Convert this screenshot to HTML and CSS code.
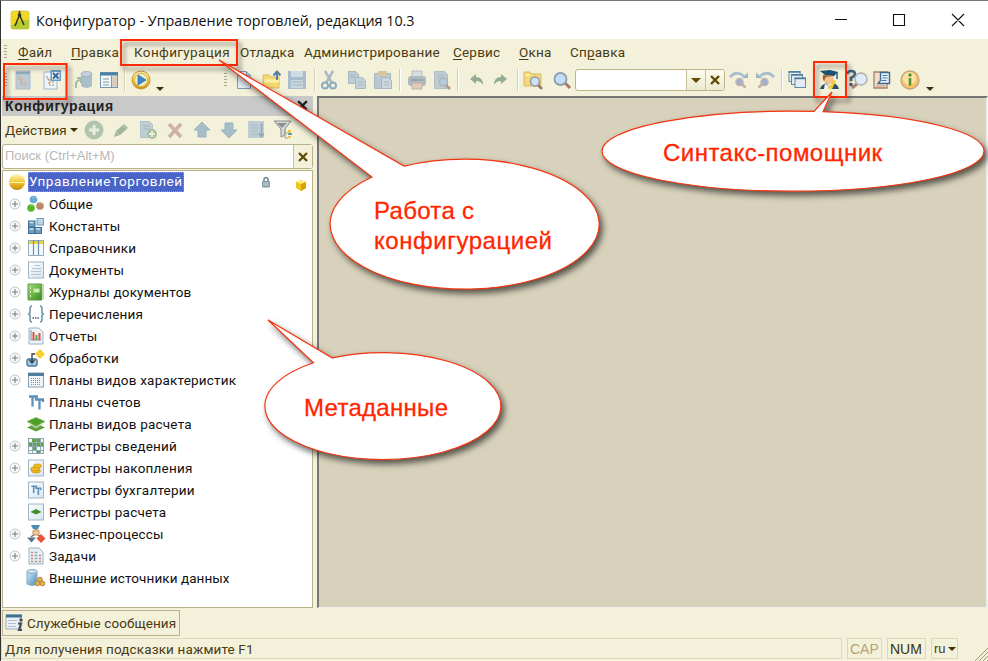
FILE: index.html
```html
<!DOCTYPE html>
<html lang="ru">
<head>
<meta charset="utf-8">
<title>Конфигуратор - Управление торговлей, редакция 10.3</title>
<link rel="stylesheet" href="styles.css">
</head>
<body>
<svg class="defs" aria-hidden="true">
  <defs>
    <linearGradient id="gGold" x1="0" y1="0" x2="0" y2="1"><stop offset="0" stop-color="#fff6c0"/><stop offset=".5" stop-color="#f3c831"/><stop offset="1" stop-color="#c98a10"/></linearGradient>
    <linearGradient id="gBlue" x1="0" y1="0" x2="1" y2="1"><stop offset="0" stop-color="#d6ecfa"/><stop offset="1" stop-color="#4e87b2"/></linearGradient>
    <linearGradient id="gPaper" x1="0" y1="0" x2="1" y2="1"><stop offset="0" stop-color="#ffffff"/><stop offset="1" stop-color="#d5e3ef"/></linearGradient>
    <linearGradient id="gGreen" x1="0" y1="0" x2="1" y2="1"><stop offset="0" stop-color="#a5dc70"/><stop offset="1" stop-color="#348a20"/></linearGradient>
    <symbol id="plus" viewBox="0 0 12 12"><circle cx="6" cy="6" r="5" fill="#fafafa" stroke="#c4c4c4"/><path d="M3 6h6M6 3v6" stroke="#777" stroke-width="1"/></symbol>
    <symbol id="paper" viewBox="0 0 18 18"><rect x="1.500" y="1" width="15" height="16" fill="url(#gPaper)" stroke="#9fb6c8"/></symbol>
    <symbol id="tt" viewBox="0 0 18 18"><path d="M2 3.500h9M5.500 3.500v10M8 6.500h9M12.500 6.500v10M9 4v3M16 7v2" fill="none" stroke="#5d91b8" stroke-width="2.300"/></symbol>
    <symbol id="mag" viewBox="0 0 20 20"><path d="M13 13l5 5" stroke="#a7776b" stroke-width="3"/><circle cx="8.500" cy="9" r="6" fill="#c4def9" stroke="#8f9eac" stroke-width="1.800"/></symbol>
    <symbol id="doc" viewBox="0 0 20 20"><path d="M3.500 1.500h9l4 4v13h-13z" fill="#e2edf5" stroke="#7d9db8"/><path d="M12.500 1.500v4h4" fill="#b9d0e2" stroke="#7d9db8"/></symbol>
    <symbol id="step" viewBox="0 0 20 20"><path d="M1 7q6-7 14-1" fill="none" stroke="#a9bfce" stroke-width="2.800"/><path d="M19 2.500v5.500h-6z" fill="#9db5c6"/><path d="M12.500 14l4 3.500" stroke="#c3a9a0" stroke-width="2.600"/><circle cx="10.500" cy="12" r="3.500" fill="#9fadd0" stroke="#c3b3ae" stroke-width="1.500"/></symbol>
    <symbol id="tree" viewBox="0 0 20 20"><rect x="3" y="1" width="14" height="18" fill="#bccbd3" stroke="#aebdc6"/><path d="M3 3h14" stroke="#94abba" stroke-width="2.500"/><path d="M6 6v3h4M8 9v6h5M8 12h5" fill="none" stroke="#d1a27c" stroke-dasharray="2 1"/></symbol>
    <symbol id="arrow" viewBox="0 0 20 20"><path d="M10 2l8 8h-4v7H6v-7H2z" fill="#a8bdca" stroke="#9bb2c1"/></symbol>
    <symbol id="undo" viewBox="0 0 20 20"><path d="M4 9l6-5v3q7 0 7 8-2-4-7-4v3z" fill="#94ab95"/></symbol>
  </defs>
</svg>

<div class="window">
  <header class="titlebar">
    <svg class="app-icon" viewBox="0 0 20 20"><rect x="1" y="1" width="18" height="18" rx="2" fill="#efd722" stroke="#d9cb5c"/><path d="M1 16q9-7 18-6v9H1z" fill="#b5cb32"/><path d="M9.500 1v4M9.500 5L5 16M9.500 5l4.500 10" stroke="#303428" stroke-width="1.600"/><circle cx="9.500" cy="5" r="1.800" fill="#333"/></svg>
    <span class="title">Конфигуратор - Управление торговлей, редакция 10.3</span>
    <svg class="caption-buttons" viewBox="0 0 140 20"><path d="M3 9.500h12M61.500 4.500h11v11h-11zM120 4l12 12M132 4l-12 12" fill="none" stroke="#111" stroke-width="1.100"/></svg>
  </header>

  <nav class="menubar">
    <i class="grip"></i>
    <span class="m1"><u>Ф</u>айл</span><span class="m2"><u>П</u>равка</span><span class="m3">Конфигурация</span><span class="m4">Отладка</span><span class="m5">Администрирование</span><span class="m6"><u>С</u>ервис</span><span class="m7"><u>О</u>кна</span><span class="m8">Сп<u>р</u>авка</span>
  </nav>

  <div class="toolbar">
    <i class="grip"></i>
    <svg class="ic"><use href="#tree"/></svg>
    <svg class="ic" viewBox="0 0 20 20"><rect x="2" y="2" width="13" height="17" fill="#eef5fa" stroke="#9db9cb"/><path d="M5 6v3h4M7 9v6h5M7 12h5" fill="none" stroke="#b9865f" stroke-dasharray="2 1"/><rect x="8.500" y="0" width="10.500" height="11" fill="#6b9dc3"/><rect x="10" y="2" width="7.500" height="7.500" fill="#e6f2fb"/><path d="M11 3l5.500 5.500M16.500 3L11 8.500" stroke="#2f6390" stroke-width="1.800"/></svg>
    <svg class="ic" viewBox="0 0 20 20"><path d="M7 4v12q5.500 4 11 0V4z" fill="#aabecb"/><ellipse cx="12.500" cy="4" rx="5.500" ry="2.500" fill="#c4d1d8" stroke="#9bb0bf"/><path d="M2 18q-1-8 4-8M3 8h4v5" fill="none" stroke="#a3bca2" stroke-width="2"/></svg>
    <svg class="ic" viewBox="0 0 20 20"><rect x="1.500" y="2.500" width="17" height="15" fill="#f4f7f8" stroke="#7395ae"/><path d="M1 4h18" stroke="#4d7ea3" stroke-width="3"/><path d="M12.500 6v11" stroke="#7c9bb0"/><path d="M4 9h6M4 12h6M4 15h6" stroke="#7d99aa"/><path d="M13 6h5v11h-5z" fill="#d8cec3"/></svg>
    <i class="sep"></i>
    <svg class="ic" viewBox="0 0 20 20"><circle cx="10" cy="10" r="9" fill="url(#gGold)" stroke="#cb9730"/><circle cx="10" cy="10" r="6.500" fill="#e7edcf" stroke="#e2b935"/><path d="M7 5l8 5-8 5z" fill="#3d86ca" stroke="#2d6da9" stroke-width=".7"/></svg>
    <i class="drop"></i>
    <i class="grip"></i>
    <svg class="ic"><use href="#doc"/></svg>
    <svg class="ic" viewBox="0 0 20 20"><path d="M2 5h6l2 2h8v11H2z" fill="#f7da70" stroke="#d9b863"/><path d="M3 11h15" stroke="#fff0a7" stroke-width="3"/><path d="M16 10V2M12.500 5.500L16 1.500l3.500 4" fill="none" stroke="#557f9c" stroke-width="2"/></svg>
    <svg class="ic" viewBox="0 0 20 20"><path d="M1 1h18v18H1z" fill="#a7bdcc"/><path d="M4 1h12v6H4z" fill="#cedce3"/><path d="M4 10h12v8H4z" fill="#cad8de"/><path d="M5 12h10M5 15h10" stroke="#9fb7c6"/></svg>
    <i class="sep"></i>
    <svg class="ic" viewBox="0 0 20 20"><path d="M6 1l7 12M14 1L7 13" stroke="#a9bac6" stroke-width="2.500"/><circle cx="6" cy="15.500" r="3" fill="none" stroke="#8ca9be" stroke-width="2"/><circle cx="14" cy="15.500" r="3" fill="none" stroke="#8ca9be" stroke-width="2"/></svg>
    <svg class="ic faded" viewBox="0 0 20 20"><path d="M1.500 1.500h7l3 3v9h-10z" fill="#b5c8d3" stroke="#9db3c1"/><path d="M8.500 7.500h7l3 3v8h-10z" fill="#bcceda" stroke="#9db3c1"/><path d="M3 5h5M3 7h5M11 12h5M11 15h5" stroke="#9db3c1"/></svg>
    <svg class="ic faded" viewBox="0 0 20 20"><path d="M1.500 3.500h16v15h-16z" fill="#b3c5d0" stroke="#a0b4c1"/><path d="M5 1h9v5H5z" fill="#d4c397"/><path d="M8.500 7.500h7l3 3v8h-10z" fill="#c6d5de" stroke="#9db3c1"/><path d="M11 12h5M11 15h5" stroke="#9db3c1"/></svg>
    <i class="sep"></i>
    <svg class="ic faded" viewBox="0 0 20 20"><path d="M5 1h10v6H5z" fill="#d3dde0" stroke="#adb9c0"/><rect x="1" y="6" width="18" height="10" rx="3" fill="#a9b3bc"/><path d="M4 10h12" stroke="#8b9dac" stroke-width="2"/><path d="M5 13h10v6H5z" fill="#e1c9b6" stroke="#bbaaa3"/></svg>
    <svg class="ic faded" viewBox="0 0 20 20"><path d="M2.500 1.500h10l3 3v14h-13z" fill="#b8c9d3" stroke="#a5b8c3"/><path d="M5 5h7M5 8h4" stroke="#9fb2bf"/><path d="M14 15l4 4" stroke="#b98d82" stroke-width="2.500"/><circle cx="11.500" cy="12" r="4" fill="#b0c8dd" stroke="#a2acb2" stroke-width="1.500"/></svg>
    <i class="sep"></i>
    <svg class="ic"><use href="#undo"/></svg>
    <svg class="ic flip"><use href="#undo"/></svg>
    <i class="sep"></i>
    <svg class="ic" viewBox="0 0 20 20"><path d="M1 2h6l2 2h9v12H1z" fill="#f3d97c" stroke="#d9b863"/><path d="M3 5h4" stroke="#fff3b0" stroke-width="2"/><path d="M14 14l5 5" stroke="#a5776a" stroke-width="2.600"/><circle cx="12" cy="11.500" r="4.500" fill="#cfe3f5" stroke="#8d9ca5" stroke-width="1.600"/></svg>
    <svg class="ic"><use href="#mag"/></svg>
    <div class="combo"><span></span><b><i class="tri"></i></b><b><svg viewBox="0 0 10 10"><path d="M1 1l8 8M9 1L1 9" stroke="#5f4a00" stroke-width="2.400"/></svg></b></div>
    <svg class="ic"><use href="#step"/></svg>
    <svg class="ic flip"><use href="#step"/></svg>
    <i class="sep"></i>
    <svg class="ic" viewBox="0 0 20 20"><g fill="#e3edf3" stroke="#5d8bab"><rect x="2" y="1.500" width="11" height="10"/><rect x="4.500" y="4.500" width="11" height="10"/><rect x="8" y="8" width="10.500" height="9.500"/></g><path d="M1.500 2h12M4 5h12M7.500 8.500h11.500" stroke="#4d7c9e" stroke-width="1.700"/></svg>
    <svg class="ic" viewBox="0 0 20 20"><path d="M5 5q-2 5 1 8l4 2 4-3 1-6z" fill="#efc68f"/><path d="M4 5q-1 4 1 6l2-4 7-1z" fill="#aa5a2d"/><path d="M1 19q1-4 6-6l3 4 5-4q4 2 5 6z" fill="#2f4d68"/><path d="M14 10l3 1-4 8H8l4-4z" fill="#f4cd31"/><path d="M6 13l4 4-1 2H5z" fill="#f5f2e2"/><path d="M1 1l10-1 8 2-4 4-9-1z" fill="#1f5070"/><path d="M18 2v7" stroke="#315e7b" stroke-width="1.500"/></svg>
    <svg class="ic help-icon" viewBox="0 0 20 20"><path d="M0 4q1-3 4-3 4 0 4 3 0 2-4 4v3" fill="none" stroke="#3e657f" stroke-width="2.600"/><path d="M2.500 13h3v3h-3z" fill="#3e657f"/><path d="M10 14l-5 4" stroke="#aa8279" stroke-width="3"/><circle cx="14" cy="9" r="6" fill="#ddecf8" stroke="#b3b0b0" stroke-width="1.500"/></svg>
    <svg class="ic" viewBox="0 0 20 20"><path d="M2 2h13v16H2z" fill="#f1dfce" stroke="#a9806a" stroke-width="1.300"/><path d="M8.500 2.500h9v11H6l2.500-3z" fill="#e5f1fb" stroke="#40698b" stroke-width="1.400"/><path d="M10.500 5.500h5M10.500 8h5M9.500 10.500h5" stroke="#487ba1"/><path d="M4 16h9" stroke="#be947c"/></svg>
    <svg class="ic" viewBox="0 0 20 20"><circle cx="10" cy="10" r="9" fill="#f6c56a" stroke="#c2a27a" stroke-width="1.300"/><circle cx="9.500" cy="8.500" r="6.500" fill="#fae3a5"/><circle cx="10" cy="5" r="1.700" fill="#529033"/><path d="M10 8v7.500" fill="none" stroke="#529033" stroke-width="2.600"/></svg>
    <i class="drop"></i>
  </div>

  <main class="workspace">
    <aside class="panel">
      <h1>Конфигурация<svg viewBox="0 0 10 10"><path d="M1 1l8 8M9 1L1 9" stroke="#222" stroke-width="2"/></svg></h1>
      <div class="actions">
        <span>Действия</span><i class="tri"></i>
        <svg class="ic" viewBox="0 0 20 20"><circle cx="10" cy="10" r="9" fill="#b2c4ab" stroke="#b3c1b0"/><path d="M5 10h10M10 5v10" stroke="#e6eddc" stroke-width="3"/></svg>
        <svg class="ic" viewBox="0 0 20 20"><path d="M3 17l2-6 8-7 4 4-8 7z" fill="#a2b69b"/><path d="M5 12l3 3M12 5l4 4" stroke="#c3d0bc"/></svg>
        <svg class="ic" viewBox="0 0 20 20"><path d="M2.500 1.500h9l3 3v13h-12z" fill="#bfced4" stroke="#b1c2cb"/><path d="M5 6h7M5 9h7" stroke="#a3b7c2"/><circle cx="14" cy="14" r="5" fill="#abc09f"/><path d="M11 14h6M14 11v6" stroke="#e7eddb" stroke-width="2"/></svg>
        <svg class="ic" viewBox="0 0 20 20"><path d="M4 4l12 13M16 4L4 17" stroke="#cbb2a5" stroke-width="3.500"/></svg>
        <svg class="ic"><use href="#arrow"/></svg>
        <svg class="ic down"><use href="#arrow"/></svg>
        <svg class="ic" viewBox="0 0 20 20"><path d="M2 1h16v17H2z" fill="#c0ced4"/><path d="M4 5h8M4 8h8M4 11h8M4 14h8" stroke="#a6bac4"/><path d="M15.500 3v13M13 13.500l2.500 3 2.500-3" fill="none" stroke="#8ca7b9" stroke-width="1.500"/></svg>
        <svg class="ic" viewBox="0 0 20 20"><path d="M1 1h17l-6 8v6l-4 2V9z" fill="#d5d8d8" stroke="#888c8e"/><path d="M4 3h10L9 8z" fill="#8b9092"/><path d="M12 9v9h3M12 13h4" fill="none" stroke="#a5a58a"/><path d="M15 10h3v3h-3zM15 16h3v2h-3z" fill="#ecc452"/><path d="M15 13h4v2h-4z" fill="#669ebc"/></svg>
      </div>
      <div class="search"><span>Поиск (Ctrl+Alt+M)</span><b><svg viewBox="0 0 10 10"><path d="M1 1l8 8M9 1L1 9" stroke="#5f4a00" stroke-width="2.300"/></svg></b></div>
      <ul class="tree">
        <li class="root"><svg class="ti" viewBox="0 0 18 18"><circle cx="9" cy="9" r="8" fill="url(#gGold)"/><path d="M1.500 9.500h15" stroke="#fff6ba"/></svg><span>УправлениеТорговлей</span><svg class="lock" viewBox="0 0 10 12"><path d="M3 6V3q2-3 4 0v3" fill="none" stroke="#667b87" stroke-width="1.400"/><rect x="1" y="5" width="8" height="6.500" rx="1" fill="#8399a5"/><path d="M2 7h6M2 9h6" stroke="#d1dadf"/></svg><svg class="cube" viewBox="0 0 12 12"><path d="M1 3l5-2 5 2v6l-5 3-5-3z" fill="#eec51d"/><path d="M1 3l5-2 5 2-5 2z" fill="#fff07e"/><path d="M6 5l5-2v6l-5 3z" fill="#d9a000"/></svg></li>
        <li><svg class="px"><use href="#plus"/></svg><svg class="ti" viewBox="0 0 18 18"><circle cx="6.500" cy="4.500" r="3.800" fill="#69a8d2"/><circle cx="4" cy="13" r="3.800" fill="#55b927"/><circle cx="13" cy="11" r="3.800" fill="#b88767"/><path d="M5 3q2-2 4 0M3 11q2-1 3 0M12 9q2-1 3 0" stroke="#fff" fill="none" opacity=".3"/></svg><span>Общие</span></li>
        <li><svg class="px"><use href="#plus"/></svg><svg class="ti" viewBox="0 0 18 18"><g fill="#6f9dbf" stroke="#3f7094"><rect x="1.500" y="4" width="6.500" height="6"/><rect x="1.500" y="10.500" width="6.500" height="6"/><rect x="8" y="10.500" width="6.500" height="6"/><rect x="10" y="1.500" width="6.500" height="6.500" fill="#b5d2e7" stroke="#6e9fc3"/></g><path d="M2.500 5.500h4M2.500 12h4M9 12h4M11 3h4" stroke="#c9dfef" stroke-width="1.300"/></svg><span>Константы</span></li>
        <li><svg class="px"><use href="#plus"/></svg><svg class="ti" viewBox="0 0 18 18"><rect x="1.500" y="1.500" width="15" height="15" fill="#f5f9fb" stroke="#93aec2"/><path d="M2 3.500h14" stroke="#eed33b" stroke-width="3"/><path d="M6.500 1v15M11.500 1v15" stroke="#6c94b1" stroke-width="1.200"/></svg><span>Справочники</span></li>
        <li><svg class="px"><use href="#plus"/></svg><svg class="ti" viewBox="0 0 18 18"><use href="#paper"/><path d="M7 4.500h6M5 7.500h9M4 10.500h10M4 13.500h10" stroke="#b3c5d1"/></svg><span>Документы</span></li>
        <li><svg class="px"><use href="#plus"/></svg><svg class="ti" viewBox="0 0 18 18"><path d="M1 1h14v16H1z" fill="url(#gGreen)" stroke="#5f9d4a"/><path d="M15 2l2-1v15l-2 1z" fill="#c3d8b6"/><rect x="6.500" y="5.500" width="6" height="4" fill="#cfe8b6"/><path d="M3 5h1M3 9h1M3 13h1" stroke="#e8f5dc" stroke-width="2"/></svg><span>Журналы документов</span></li>
        <li><svg class="px"><use href="#plus"/></svg><svg class="ti" viewBox="0 0 18 18"><path d="M5 1Q3 1 3 4v3Q3 9 1 9q2 0 2 2v3q0 3 2 3M13 1q2 0 2 3v3q0 2 2 2-2 0-2 2v3q0 3-2 3" fill="none" stroke="#6f93ac" stroke-width="1.600"/><path d="M5.500 13h1.500m1 0h1.500m1 0h1.500" stroke="#41637c" stroke-width="1.500"/></svg><span>Перечисления</span></li>
        <li><svg class="px"><use href="#plus"/></svg><svg class="ti" viewBox="0 0 18 18"><path d="M2 1h10l4 4v12H2z" fill="#edf3f7" stroke="#9bb1c1"/><path d="M4 3v10h10" fill="none" stroke="#7890a0"/><path d="M6.500 5v8M12.500 6v7" stroke="#e04f42" stroke-width="2"/><path d="M9.500 8v5" stroke="#55a851" stroke-width="2"/></svg><span>Отчеты</span></li>
        <li><svg class="px"><use href="#plus"/></svg><svg class="ti" viewBox="0 0 18 18"><rect x="0" y="10" width="10" height="7" rx="2" fill="#a7cae3" stroke="#45799e" stroke-width="1.400"/><path d="M13 0l5 5-5 5-5-5z" fill="#f8cf30"/><path d="M8 5H5v8M2.500 11L5 14l2.500-3" fill="none" stroke="#343c42" stroke-width="1.300"/></svg><span>Обработки</span></li>
        <li><svg class="px"><use href="#plus"/></svg><svg class="ti" viewBox="0 0 18 18"><rect x="1.500" y="2" width="15" height="14" fill="#f0f5f8" stroke="#829fb3"/><path d="M1 3.500h16" stroke="#507d9e" stroke-width="3"/><path d="M4 7.500h10M4 9.500h10M4 11.500h10M4 13.500h10" stroke="#7893a5" stroke-dasharray="1 1"/></svg><span>Планы видов характеристик</span></li>
        <li><i class="px"></i><svg class="ti"><use href="#tt"/></svg><span>Планы счетов</span></li>
        <li><i class="px"></i><svg class="ti" viewBox="0 0 18 18"><path d="M0 12.500l9-4 9 4-9 4z" fill="#5ea03a"/><path d="M2 9.500l7 4 7-4z" fill="#a9cf92"/><path d="M0 6.500l9-4 9 4-9 4.500z" fill="#519d28" stroke="#74b950" stroke-width=".7"/></svg><span>Планы видов расчета</span></li>
        <li><svg class="px"><use href="#plus"/></svg><svg class="ti" viewBox="0 0 18 18"><rect x="1.500" y="1.500" width="15" height="15" fill="#f4f8f8" stroke="#8aa6b6"/><path d="M1 5.500h16M1 9.500h16M1 13.500h16M5.500 1v16M9.500 1v16M13.500 1v16" stroke="#8fabb5" stroke-width="1"/><path d="M5 2h4v3H5zM10 2h3v3h-3zM2 6h3v3H2zM6 6h3v3H6zM10 6h3v3h-3zM14 6h2v3h-2zM6 10h3v3H6zM10 14h3v2h-3z" fill="#5fa63a"/></svg><span>Регистры сведений</span></li>
        <li><svg class="px"><use href="#plus"/></svg><svg class="ti" viewBox="0 0 18 18"><use href="#paper"/><g fill="#f3bd23" stroke="#c58b16" stroke-width=".7"><ellipse cx="9" cy="12" rx="4.500" ry="2"/><ellipse cx="8" cy="10" rx="4.500" ry="2"/><ellipse cx="10.500" cy="7" rx="4" ry="2"/></g></svg><span>Регистры накопления</span></li>
        <li><i class="px"></i><svg class="ti" viewBox="0 0 18 18"><use href="#paper"/><use href="#tt" x="3" y="2.500" width="12" height="13"/></svg><span>Регистры бухгалтерии</span></li>
        <li><i class="px"></i><svg class="ti" viewBox="0 0 18 18"><use href="#paper"/><path d="M3.500 9l5.500-3 5.500 3-5.500 2.500z" fill="#3f8f2b"/></svg><span>Регистры расчета</span></li>
        <li><svg class="px"><use href="#plus"/></svg><svg class="ti" viewBox="0 0 18 18"><path d="M9 4v6M4 12l5-4 6 5" stroke="#766d69" stroke-width="1.500" fill="none"/><path d="M4 0h9l-2 4H6z" fill="#4e8cb8"/><rect x="6" y="5" width="6" height="5" rx="1" fill="#efc796" stroke="#c59363"/><path d="M0 12.500h9l-4.500 5z" fill="#59758a"/><path d="M14 9l4.500 4.500-4.500 4.500-4.500-4.500z" fill="#e65336"/></svg><span>Бизнес-процессы</span></li>
        <li><svg class="px"><use href="#plus"/></svg><svg class="ti" viewBox="0 0 18 18"><path d="M2 1h10l4 4v12H2z" fill="#e8f0f5" stroke="#9cb2c1"/><path d="M4 5.500h2m-2 3h2m-2 3h2m-2 3h2M12 8.500h2m-2 3h2m-2 3h2" stroke="#ce7f78" stroke-width="1.400"/><path d="M7.500 5.500h3m-3 3h3m-3 3h3m-3 3h3" stroke="#8fabbd" stroke-width="1.400"/></svg><span>Задачи</span></li>
        <li><i class="px"></i><svg class="ti" viewBox="0 0 18 18"><path d="M0 2v13q5 3 10 0V2z" fill="url(#gBlue)" stroke="#83a9c3"/><ellipse cx="5" cy="2.500" rx="5" ry="2" fill="#cde3f1" stroke="#83a9c3"/><g fill="#e4b34b" stroke="#b48834"><circle cx="13" cy="10.500" r="2.300"/><circle cx="10.500" cy="14.500" r="2.300"/><circle cx="15.500" cy="14.500" r="2.300"/></g></svg><span class="tight">Внешние источники данных</span></li>
      </ul>
    </aside>
    <section class="mdi"></section>
  </main>

  <div class="dock"><div class="tab"><svg viewBox="0 0 20 20"><rect x="1" y="2" width="15" height="14" fill="#eaf0f3" stroke="#9cb0bd"/><path d="M1 3h16" stroke="#3f7195" stroke-width="3"/><path d="M3 7.500h9M3 10.500h8M3 13.500h8" stroke="#b1c0ca"/><circle cx="16" cy="7" r="1.700" fill="#40505c"/><path d="M13 10.500h3l-2 6.500h3" fill="none" stroke="#40505c" stroke-width="2.200"/></svg><span>Служебные сообщения</span></div></div>
  <footer class="status"><span class="hint">Для получения подсказки нажмите F1</span><span class="cap">CAP</span><span class="num">NUM</span><span class="lang">ru<i class="tri"></i></span><svg class="resize" viewBox="0 0 14 14"><path d="M1 14L14 1M5 14l9-9M9 14l5-5M13 14l1-1" stroke="#9e9779"/></svg></footer>

  <svg class="callouts" viewBox="0 0 988 661">
    <g class="frame">
      <rect x="4" y="64" width="62.500" height="35"/>
      <rect x="121" y="40" width="116" height="25"/>
      <rect x="814" y="62" width="32" height="35"/>
    </g>
    <g class="balloon">
      <path d="M219 60L404 166.100A134.500 65 0 1 1 372 177Z"/>
      <path d="M832 92L823 111.700A191 40 0 0 1 984 151.200A191 40 0 0 1 602 151.200A191 40 0 0 1 814 111.400Z"/>
      <path d="M268 320L332 357.800A118 53.500 0 1 1 313.500 362.800Z"/>
    </g>
    <g class="note">
      <text x="374" y="219" textLength="100">Работа с</text>
      <text x="374" y="249" textLength="178">конфигурацией</text>
      <text x="663" y="161" textLength="219">Синтакс-помощник</text>
      <text x="304" y="416" textLength="144">Метаданные</text>
    </g>
  </svg>
</div>
</body>
</html>
```
FILE: styles.css
```css
* { box-sizing: border-box; }
body { margin: 0; background: #f4f0da; }
.defs { position: absolute; width: 0; height: 0; }
.window {
  position: relative;
  width: 988px;
  height: 661px;
  overflow: hidden;
  display: flex;
  flex-direction: column;
  background: #f4f1db;
  border-top: 1px solid #777;
  border-left: 1px solid #333;
  font-family: Roboto, "Liberation Sans", sans-serif;
  font-size: 13.5px;
  color: #4a3b12;
  white-space: nowrap;
}
.titlebar { height: 38px; background: #fff; display: flex; align-items: center; padding-left: 9px; flex: none; }
.app-icon { width: 20px; height: 20px; }
.title { margin-left: 6px; flex: 1; font: 14.3px "Open Sans", sans-serif; color: #111; }
.caption-buttons { width: 140px; height: 20px; margin-right: 16px; }

.grip { width: 3px; height: 15px; align-self: center; background: repeating-linear-gradient(#aaa68c 0 1px, transparent 1px 3px); }
.menubar { height: 25px; flex: none; display: grid; grid-template-columns: 14px 53px 63px 106px 64px 149px 66px 51px auto; padding: 1px 0 0 3px; align-items: center; }
.menubar u { text-underline-offset: 2px; }
.m1, .m2, .m3, .m4, .m5, .m6, .m7, .m8 { letter-spacing: .2px; }
.m3 { letter-spacing: .35px; }

.toolbar {
  height: 32px; flex: none; padding-left: 3px; align-items: center; display: grid;
  grid-template-columns: 9px 29px 32px 25px 25px 7px 25px 68px 10px 27px 26px 27px 5px 28px 26px 26px 8px 25px 25px 9px 25px 26px 6px 29px 23px 154px 26px 26px 6px 32px 28px 25px 28px 26px 20px;
}
.ic { width: 20px; height: 20px; display: block; overflow: visible; }
.faded { opacity: .9; }
.flip { transform: scaleX(-1); }
.down { transform: scaleY(-1); }
.sep { width: 2px; height: 22px; background: linear-gradient(90deg, #d3cdb2 50%, #fff 50%); }
.drop { border: 4px solid transparent; border-top-color: #3d3008; border-bottom: 0; width: 0; margin-top: 18px; }
.tri { border: 4px solid transparent; border-top-color: #3d3008; border-bottom: 0; width: 0; }
.combo { width: 150px; height: 22px; display: flex; border: 1px solid #bcb58c; border-radius: 3px; background: #fff; overflow: hidden; }
.combo span { flex: 1; }
.combo b { width: 19px; border-left: 1px solid #c7c09c; background: linear-gradient(#fcfbef, #edebd0); display: grid; place-items: center; }
.combo .tri { border-width: 5px 5px 0; border-top-color: #5f4a00; }
.combo svg, .search svg { width: 10px; height: 10px; }

.workspace { height: 512px; flex: none; display: flex; }
.panel { width: 312px; display: flex; flex-direction: column; padding-left: 1px; }
.panel h1 { margin: 0; height: 20px; background: #c9c9c9; font: bold 14px "Liberation Sans", sans-serif; color: #222; display: flex; justify-content: space-between; align-items: center; padding: 0 5px 1px 3px; letter-spacing: .6px; }
.panel h1 svg { width: 11px; height: 11px; }
.actions { height: 28px; padding-bottom: 1px; display: flex; align-items: center; gap: 7px; padding-left: 3px; }
.actions .tri { margin: 0 -1px 0 -4px; }
.search { height: 25px; margin-bottom: 1px; border: 1px solid #b9b28a; border-radius: 3px; background: #fff; display: flex; }
.search span { flex: 1; padding: 3px 0 0 2px; font: 13px "Liberation Sans", sans-serif; color: #b8b8b8; }
.search b { width: 19px; border-left: 1px solid #c7c09c; background: #f4f1db; display: grid; place-items: center; }
.tree { margin: 0; padding: 0 0 0 7px; height: 438px; border: 1px solid #b9b28a; list-style: none; background: #fff; color: #111; }
.tree li { height: 22px; display: flex; align-items: center; letter-spacing: .2px; }
.tree .tight { letter-spacing: .08px; }
.px { width: 12px; height: 12px; margin: 0 6px 0 -1px; }
.ti { width: 18px; height: 18px; margin-right: 4px; overflow: visible; }
.root .ti { margin: 0 2px 0 -2px; }
.root span { height: 20px; line-height: 19px; padding: 0 1px; background: #4a63c8; color: #fff; outline: 1px dotted #8a9be0; outline-offset: -1px; letter-spacing: .6px; }
.lock { width: 10px; height: 12px; margin-left: 77px; }
.cube { width: 12px; height: 12px; margin: 5px 0 0 24px; }
.mdi { flex: 1; margin-left: 4px; background: #d8d2bc; border: solid; border-width: 2px 2px 1px 2px; border-color: #77777a #eee #eee #77777a; }

.dock { height: 30px; flex: none; padding: 2px 0 0 1px; }
.tab { width: 178px; height: 26px; display: flex; align-items: center; border: 1px solid #b9b28a; padding: 0 0 1px 2px; letter-spacing: .08px; }
.tab svg { width: 20px; height: 20px; margin-right: 2px; }
.status { flex: 1; display: flex; position: relative; }
.status > span { height: 21px; border: 1px solid #dcd8bd; padding-top: 2px; }
.hint { width: 841px; padding-left: 3px; letter-spacing: .13px; }
.cap, .num, .lang { font: 14px "Liberation Sans", sans-serif; padding-left: 2px; }
.cap { margin-left: 5px; width: 35px; color: #b3a572; }
.num { margin-left: 5px; width: 39px; color: #3d3008; }
.lang { margin-left: 5px; width: 27px; display: flex; font-size: 13px; }
.lang .tri { margin: 6px 0 0 2px; height: 0; }
.resize { position: absolute; right: 0; bottom: 0; width: 14px; height: 14px; }

.callouts { position: absolute; left: -1px; top: -1px; width: 988px; height: 661px; pointer-events: none; }
.frame { fill: none; stroke: #ff2b06; stroke-width: 2; filter: drop-shadow(3px 4px 2px rgba(0,0,0,.45)); }
.balloon { fill: #fff; stroke: #f5330f; stroke-width: 1.2; filter: drop-shadow(3px 4px 3px rgba(0,0,0,.6)); }
.note { font: 24px "Liberation Sans", sans-serif; fill: #ff2600; stroke: #ff2600; stroke-width: .3; }
```
